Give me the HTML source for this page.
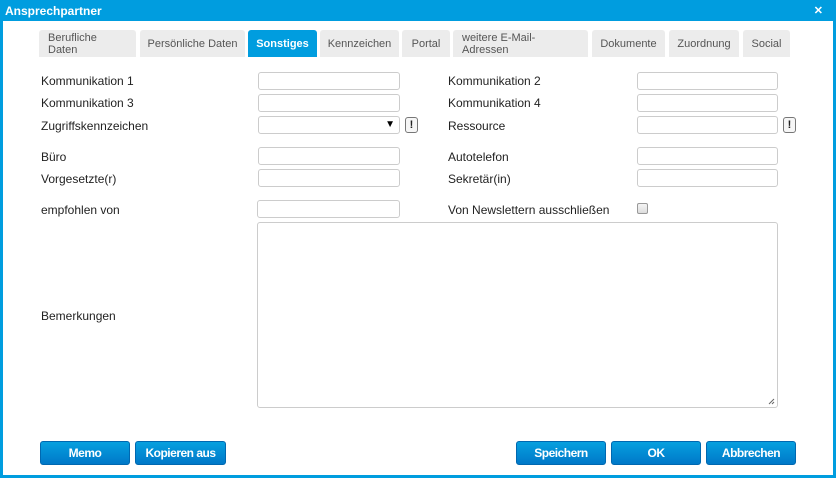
<!DOCTYPE html>
<html><head><meta charset="utf-8"><style>
*{box-sizing:border-box}
body{margin:0;width:836px;height:478px;overflow:hidden;font-family:"Liberation Sans",Arial,sans-serif;font-size:12px;color:#222;background:#fff;position:relative}
.frame{position:absolute;inset:0;border:3px solid #009ddf;border-top:none}
.title{position:absolute;left:0;top:0;width:836px;height:21px;background:#009ddf;color:#fff;font-weight:bold;font-size:12px;line-height:22px;padding-left:5px}
.x{position:absolute;right:13px;top:0;color:#fff;font-weight:bold;font-size:11px;line-height:23px}
.tab{position:absolute;top:30px;height:27px;background:#ececec;border-radius:3px 3px 0 0;color:#555;font-size:11px;display:flex;align-items:center;justify-content:center;line-height:12px}
.tab.two{justify-content:flex-start;padding-left:9px}
.tab.act{background:#009ddf;color:#fff;font-weight:bold}
.lbl{position:absolute;font-size:12px;color:#222}
.in{position:absolute;height:18px;border:1px solid #ccc;border-radius:3px;background:#fff}
.ex{position:absolute;width:13px;height:16px;border:1px solid #777;border-radius:3px;font-weight:bold;font-size:11px;text-align:center;line-height:14px;background:#f6f6f6}
.btn{position:absolute;top:441px;height:24px;border-radius:3px;background:linear-gradient(#06a0df,#0078c8);border:1px solid #0068b0;color:#fff;font-weight:bold;font-size:12px;text-align:center;line-height:22px;letter-spacing:-0.5px}
</style></head><body>
<div class="frame"></div>
<div class="title">Ansprechpartner</div><div class="x">✕</div>
<div class="tab two" style="left:39px;width:97px">Berufliche<br>Daten</div>
<div class="tab" style="left:140px;width:105px">Persönliche Daten</div>
<div class="tab act" style="left:248px;width:69px">Sonstiges</div>
<div class="tab" style="left:320px;width:79px">Kennzeichen</div>
<div class="tab" style="left:402px;width:48px">Portal</div>
<div class="tab two" style="left:453px;width:135px">weitere E-Mail-<br>Adressen</div>
<div class="tab" style="left:592px;width:73px">Dokumente</div>
<div class="tab" style="left:669px;width:70px">Zuordnung</div>
<div class="tab" style="left:743px;width:47px">Social</div>

<div class="lbl" style="left:41px;top:74px">Kommunikation 1</div>
<div class="in" style="left:258px;top:72px;width:142px"></div>
<div class="lbl" style="left:448px;top:74px">Kommunikation 2</div>
<div class="in" style="left:637px;top:72px;width:141px"></div>

<div class="lbl" style="left:41px;top:96px">Kommunikation 3</div>
<div class="in" style="left:258px;top:94px;width:142px"></div>
<div class="lbl" style="left:448px;top:96px">Kommunikation 4</div>
<div class="in" style="left:637px;top:94px;width:141px"></div>

<div class="lbl" style="left:41px;top:119px">Zugriffskennzeichen</div>
<div class="in" style="left:258px;top:116px;width:142px"><span style="position:absolute;right:4px;top:2px;font-size:10px;color:#000">▼</span></div>
<div class="ex" style="left:405px;top:117px">!</div>
<div class="lbl" style="left:448px;top:119px">Ressource</div>
<div class="in" style="left:637px;top:116px;width:141px"></div>
<div class="ex" style="left:783px;top:117px">!</div>

<div class="lbl" style="left:41px;top:150px">Büro</div>
<div class="in" style="left:258px;top:147px;width:142px"></div>
<div class="lbl" style="left:448px;top:150px">Autotelefon</div>
<div class="in" style="left:637px;top:147px;width:141px"></div>

<div class="lbl" style="left:41px;top:172px">Vorgesetzte(r)</div>
<div class="in" style="left:258px;top:169px;width:142px"></div>
<div class="lbl" style="left:448px;top:172px">Sekretär(in)</div>
<div class="in" style="left:637px;top:169px;width:141px"></div>

<div class="lbl" style="left:41px;top:203px">empfohlen von</div>
<div class="in" style="left:257px;top:200px;width:143px"></div>
<div class="lbl" style="left:448px;top:203px">Von Newslettern ausschließen</div>
<div style="position:absolute;left:637px;top:203px;width:11px;height:11px;border:1px solid #999;border-radius:2px;background:linear-gradient(#f4f4f4,#ddd)"></div>

<div class="lbl" style="left:41px;top:309px">Bemerkungen</div>
<div class="in" style="left:257px;top:222px;width:521px;height:186px"><svg style="position:absolute;right:2px;bottom:2px" width="7" height="7"><path d="M1 6L6 1M4 6L6 4" stroke="#666"/></svg></div>

<div class="btn" style="left:40px;width:90px">Memo</div>
<div class="btn" style="left:135px;width:91px">Kopieren aus</div>
<div class="btn" style="left:516px;width:90px">Speichern</div>
<div class="btn" style="left:611px;width:90px">OK</div>
<div class="btn" style="left:706px;width:90px">Abbrechen</div>
</body></html>
